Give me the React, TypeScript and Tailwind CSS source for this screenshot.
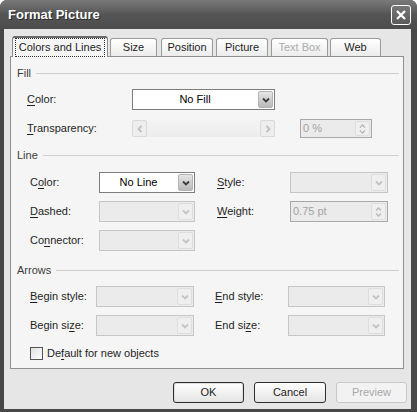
import React from "react";

const font = { fontFamily: '"Liberation Sans", Arial, sans-serif' };

function Chevron({ dir = "down", color }: { dir?: "down" | "up" | "left" | "right"; color: string }) {
    const paths: Record<string, string> = {
        down: "M1 1.5 L4 4.5 L7 1.5",
        up: "M1 4.5 L4 1.5 L7 4.5",
        left: "M5.5 1 L2.5 4 L5.5 7",
        right: "M2.5 1 L5.5 4 L2.5 7",
    };
    const vert = dir === "down" || dir === "up";
    return (
        <svg width={vert ? 8 : 8} height={vert ? 6 : 8} viewBox={vert ? "0 0 8 6" : "0 0 8 8"}>
            <path d={paths[dir]} fill="none" stroke={color} strokeWidth="1.8" />
        </svg>
    );
}

function U({ text, at }: { text: string; at: number }) {
    return (
        <span>
            {text.slice(0, at)}
            <span className="underline underline-offset-2">{text[at]}</span>
            {text.slice(at + 1)}
        </span>
    );
}

function Combo({ w, value, enabled = false }: { w: string; value?: string; enabled?: boolean }) {
    return (
        <div
            className={`${w} h-[21px] flex items-stretch border ${
                enabled ? "border-[#7d7d7d] bg-white" : "border-[#c6c6c6] bg-[#ebebeb]"
            }`}
        >
            <div className="flex-1 flex items-center justify-center text-black">{value}</div>
            {enabled ? (
                <div className="w-[15px] m-px flex items-center justify-center rounded-[2px] border border-[#b4b4b4] bg-gradient-to-b from-[#e6e6e6] to-[#b9b9b9]">
                    <Chevron color="#3c3c3c" />
                </div>
            ) : (
                <div className="w-[15px] m-px flex items-center justify-center rounded-[2px] border border-[#dedede] bg-[#efefef]">
                    <Chevron color="#c4c4c4" />
                </div>
            )}
        </div>
    );
}

function Spin({ w, h, value }: { w: string; h: string; value: string }) {
    return (
        <div className={`${w} ${h} flex items-stretch border border-[#a9a9a9] bg-[#ebebeb]`}>
            <div className="flex-1 flex items-center pl-[2px] text-[#a3a3a3]">{value}</div>
            <div className="w-[15px] m-px flex flex-col items-center justify-center gap-[2px] rounded-[2px] border border-[#dedede] bg-[#efefef]">
                <svg width="7" height="4" viewBox="0 0 7 4"><path d="M1 3.5 L3.5 1 L6 3.5" fill="none" stroke="#b8b8b8" strokeWidth="1.3" /></svg>
                <svg width="7" height="4" viewBox="0 0 7 4"><path d="M1 0.5 L3.5 3 L6 0.5" fill="none" stroke="#b8b8b8" strokeWidth="1.3" /></svg>
            </div>
        </div>
    );
}

function Slider() {
    return (
        <div className="w-[143px] h-[17px] flex items-stretch bg-gradient-to-b from-[#f4f4f4] to-[#ececec]">
            <div className="w-[15px] flex items-center justify-center rounded-[2px] border border-[#dadada] bg-[#eeeeee]">
                <Chevron dir="left" color="#c0c0c0" />
            </div>
            <div className="flex-1" />
            <div className="w-[15px] flex items-center justify-center rounded-[2px] border border-[#dadada] bg-[#eeeeee]">
                <Chevron dir="right" color="#c0c0c0" />
            </div>
        </div>
    );
}

function Group({ title, mt }: { title: string; mt: string }) {
    return (
        <div className={`${mt} h-[14px] pl-[6px] pr-[4px] flex items-center gap-[5px]`}>
            <span className="text-[#3c3c3c]">{title}</span>
            <div className="flex-1 h-px bg-[#cfcfcf]" />
        </div>
    );
}

const tabs = [
    { name: "Colors and Lines", w: "w-[96px]", ml: "ml-[2px]" },
    { name: "Size", w: "w-[47px]", ml: "ml-[2px]" },
    { name: "Position", w: "w-[52px]", ml: "ml-[4px]" },
    { name: "Picture", w: "w-[52px]", ml: "ml-[3px]" },
    { name: "Text Box", w: "w-[57px]", ml: "ml-[3px]", disabled: true },
    { name: "Web", w: "w-[51px]", ml: "ml-[2px]" },
];

export default function App() {
    return (
        <div className="w-[417px] h-[412px] flex flex-col bg-[#484848] rounded-t-[7px] text-[11px] text-[#1e1e1e]" style={font}>
            {/* title bar */}
            <div className="h-[29px] flex items-center justify-between pl-[8px] pr-[6px] rounded-t-[7px] bg-gradient-to-b from-[#7a7a7a] via-[#555555] to-[#4c4c4c]">
                <span className="text-white text-[13px] font-bold [text-shadow:1px_1px_0_#2a2a2a]">Format Picture</span>
                <div className="w-[20px] h-[20px] rounded-[3px] border border-white bg-gradient-to-b from-[#777777] to-[#5a5a5a] flex items-center justify-center">
                    <svg width="12" height="12" viewBox="0 0 12 12">
                        <path d="M2 2 L10 10 M10 2 L2 10" stroke="white" strokeWidth="2.2" />
                    </svg>
                </div>
            </div>

            {/* body */}
            <div className="flex-1 ml-[4px] mr-[6px] mb-[3px] bg-[#e6e6e6] pl-[6px] pt-[7px] flex flex-col">
                {/* tabs */}
                <div className="flex items-end h-[20px] relative z-10">
                    {tabs.map((t, i) =>
                        i === 0 ? (
                            <div
                                key={t.name}
                                className={`${t.w} ${t.ml} h-[21px] mb-[-1px] rounded-t-[3px] border border-b-0 border-t-2 border-[#8c8c8c] border-t-[#6a6a6a] bg-[#f5f5f5] flex items-center justify-center`}
                            >
                                <span className="px-[3px] border border-dotted border-[#333]">{t.name}</span>
                            </div>
                        ) : (
                            <div
                                key={t.name}
                                className={`${t.w} ${t.ml} h-[18px] rounded-t-[3px] border border-b-0 border-[#9a9a9a] bg-gradient-to-b from-white to-[#ececec] flex items-center justify-center ${
                                    t.disabled ? "text-[#acacac]" : ""
                                }`}
                            >
                                {t.name}
                            </div>
                        )
                    )}
                </div>

                {/* panel */}
                <div className="w-[394px] h-[313px] border border-[#8f8f8f] bg-[#f5f5f5] flex flex-col">
                    <Group title="Fill" mt="mt-[9px]" />
                    <div className="mt-[9px] pl-[16px] flex items-center">
                        <span className="w-[105px]"><U text="Color:" at={0} /></span>
                        <Combo w="w-[143px]" value="No Fill" enabled />
                    </div>
                    <div className="mt-[9px] pl-[16px] flex items-center">
                        <span className="w-[105px]"><U text="Transparency:" at={0} /></span>
                        <Slider />
                        <div className="ml-[25px]">
                            <Spin w="w-[72px]" h="h-[19px]" value="0 %" />
                        </div>
                    </div>

                    <Group title="Line" mt="mt-[10px]" />
                    <div className="mt-[10px] pl-[19px] flex items-center">
                        <span className="w-[69px]"><U text="Color:" at={1} /></span>
                        <Combo w="w-[96px]" value="No Line" enabled />
                        <span className="ml-[22px] w-[73px]"><U text="Style:" at={0} /></span>
                        <Combo w="w-[98px]" />
                    </div>
                    <div className="mt-[8px] pl-[19px] flex items-center">
                        <span className="w-[69px]"><U text="Dashed:" at={0} /></span>
                        <Combo w="w-[96px]" />
                        <span className="ml-[22px] w-[73px]"><U text="Weight:" at={0} /></span>
                        <Spin w="w-[98px]" h="h-[21px]" value="0.75 pt" />
                    </div>
                    <div className="mt-[8px] pl-[19px] flex items-center">
                        <span className="w-[69px]"><U text="Connector:" at={2} /></span>
                        <Combo w="w-[96px]" />
                    </div>

                    <Group title="Arrows" mt="mt-[12px]" />
                    <div className="mt-[9px] pl-[19px] flex items-center">
                        <span className="w-[66px]"><U text="Begin style:" at={0} /></span>
                        <Combo w="w-[98px]" />
                        <span className="ml-[21px] w-[73px]"><U text="End style:" at={0} /></span>
                        <Combo w="w-[97px]" />
                    </div>
                    <div className="mt-[8px] pl-[19px] flex items-center">
                        <span className="w-[66px]"><U text="Begin size:" at={8} /></span>
                        <Combo w="w-[98px]" />
                        <span className="ml-[21px] w-[73px]"><U text="End size:" at={6} /></span>
                        <Combo w="w-[97px]" />
                    </div>
                    <div className="mt-[9px] pl-[19px] flex items-center gap-[4px]">
                        <div className="w-[13px] h-[13px] border border-[#555] bg-gradient-to-br from-[#e0e0e0] to-white" />
                        <span><U text="Default for new objects" at={2} /></span>
                    </div>
                </div>

                {/* buttons */}
                <div className="mt-[13px] flex pl-[163px] gap-[10px]">
                    <button className="w-[71px] h-[21px] rounded-[3px] border border-[#2e2e2e] bg-gradient-to-b from-white to-[#e4e4e4] shadow-[inset_0_0_0_1px_#dcdcdc]">OK</button>
                    <button className="w-[72px] h-[21px] rounded-[3px] border border-[#2e2e2e] bg-gradient-to-b from-white to-[#e4e4e4]">Cancel</button>
                    <button className="w-[71px] h-[21px] rounded-[3px] border border-[#c8c8c8] bg-[#f2f2f2] text-[#a8a8a8]">Preview</button>
                </div>
            </div>
        </div>
    );
}
